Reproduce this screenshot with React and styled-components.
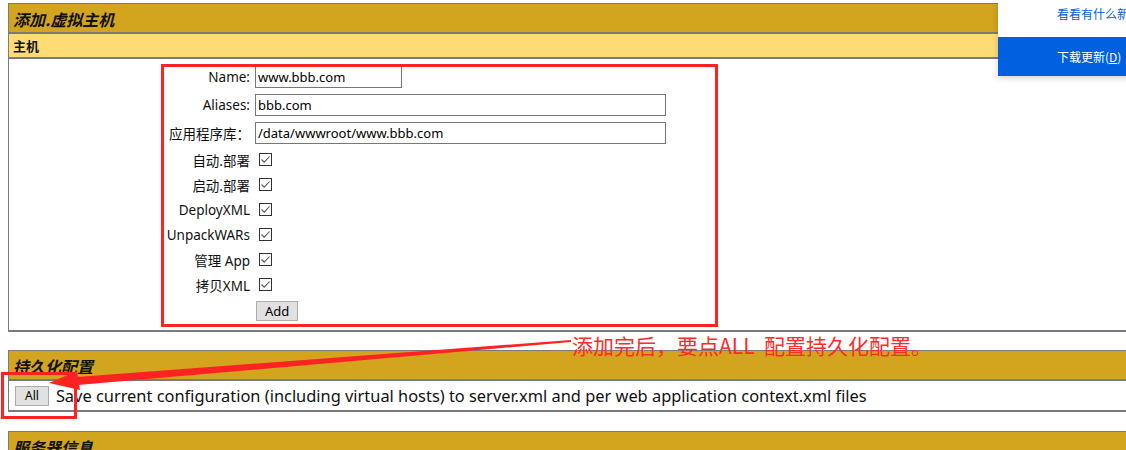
import React from 'react';
import styled, { createGlobalStyle } from 'styled-components';

const GlobalStyle = createGlobalStyle`
  html, body {
    margin: 0;
    padding: 0;
    overflow: hidden;
    background: #fff;
  }
  body {
    font-family: "Noto Sans", "Noto Sans CJK SC", sans-serif;
    color: #000;
  }
`;

const Page = styled.div`
  position: relative;
  width: 1126px;
  height: 450px;
  overflow: hidden;
  padding: 3px 0 0 8px;
  box-sizing: border-box;
`;

const Section = styled.div`
  width: 1140px;
  border-top: 1px solid #7b7b7b;
  border-left: 1px solid #7b7b7b;
  border-bottom: 2px solid #7b7b7b;
  margin-bottom: ${p => p.$mb || 0}px;
`;

const TitleBar = styled.div`
  height: 30px;
  box-sizing: border-box;
  padding: 2px 0 0 4px;
  display: flex;
  align-items: center;
  background: #d3a41d;
  font-family: "Noto Sans CJK SC", sans-serif;
  font-size: 16px;
  font-weight: 700;
  font-style: italic;
  color: #111;
  border-bottom: 2px solid #7b7b7b;
`;

const SubBar = styled.div`
  height: 25px;
  box-sizing: border-box;
  padding-left: 4px;
  display: flex;
  align-items: center;
  background: #ffdb76;
  font-family: "Noto Sans CJK SC", sans-serif;
  font-size: 13px;
  font-weight: 700;
  color: #111;
  border-bottom: 2px solid #7b7b7b;
`;

const Body = styled.div`
  height: 271px;
  box-sizing: border-box;
  padding: 4px 0 0 154px;
  background: #fff;
`;

const Form = styled.div`
  display: flex;
  flex-direction: column;
`;

const FormRow = styled.div`
  display: grid;
  grid-template-columns: 87px auto;
  column-gap: 5px;
  align-items: center;
  height: ${p => p.$h}px;
`;

const Label = styled.label`
  text-align: right;
  white-space: nowrap;
  font-size: 13.5px;
  font-family: "Noto Sans", "Noto Sans CJK SC", sans-serif;
  color: #111;
`;

const TextInput = styled.input`
  box-sizing: border-box;
  width: ${p => p.$w}px;
  height: 22px;
  border: 1px solid #777;
  padding: 0 2px;
  font-size: 13px;
  font-family: "Noto Sans", sans-serif;
  color: #000;
  background: #fff;
  outline: none;
`;

const Box = styled.span`
  display: inline-flex;
  align-items: center;
  justify-content: center;
  width: 13px;
  height: 13px;
  box-sizing: border-box;
  margin-left: 4px;
  border: 1px solid #333;
  background: #fff;
`;

const Button = styled.button`
  box-sizing: border-box;
  height: 20px;
  padding: 0 ${p => p.$px}px;
  border: 1px solid #adadad;
  background: #e1e1e1;
  font-family: "Noto Sans", sans-serif;
  font-size: ${p => p.$fs}px;
  line-height: 18px;
  color: #000;
`;

const AddButton = styled(Button)`
  justify-self: start;
  margin-left: 1px;
`;

const SaveRow = styled.div`
  height: 29px;
  display: flex;
  align-items: center;
  gap: 7px;
  padding-left: 6px;
  background: #fff;
`;

const SaveText = styled.span`
  font-size: 16.4px;
  font-family: "Noto Sans", sans-serif;
  white-space: nowrap;
  color: #111;
`;

const Highlight = styled.div`
  position: absolute;
  left: ${p => p.$x}px;
  top: ${p => p.$y}px;
  width: ${p => p.$w}px;
  height: ${p => p.$h}px;
  box-sizing: border-box;
  border: 3px solid #ff2222;
  pointer-events: none;
`;

const Note = styled.div`
  position: absolute;
  left: 572px;
  top: 333px;
  font-family: "Noto Sans CJK SC", sans-serif;
  font-size: 21px;
  line-height: 24px;
  color: #ff2a2a;
  white-space: pre;
`;

const ArrowSvg = styled.svg`
  position: absolute;
  left: 0;
  top: 0;
  pointer-events: none;
`;

const Popup = styled.div`
  position: absolute;
  top: 0;
  left: 998px;
  width: 160px;
  box-shadow: 0 2px 6px rgba(0, 0, 0, 0.18);
  font-family: "Noto Sans CJK SC", sans-serif;
  font-size: 12px;
`;

const PopupLink = styled.div`
  height: 37px;
  box-sizing: border-box;
  padding: 5px 0 0 59px;
  background: #fff;
  color: #0060df;
  white-space: nowrap;
`;

const PopupAction = styled.div`
  height: 39px;
  display: flex;
  align-items: center;
  padding-left: 59px;
  background: #0061e0;
  color: #fff;
  white-space: nowrap;
`;

function Check() {
  return (
    <Box>
      <svg width="11" height="11" viewBox="0 0 11 11">
        <polyline points="1.5,5.5 4.2,8.2 9.5,2.5" fill="none" stroke="#555" strokeWidth="1.1" />
      </svg>
    </Box>
  );
}

const checks = ['自动.部署', '启动.部署', 'DeployXML', 'UnpackWARs', '管理 App', '拷贝XML'];

export default function App() {
  return (
    <Page>
      <GlobalStyle />
      <Section $mb={18}>
        <TitleBar>添加.虚拟主机</TitleBar>
        <SubBar>主机</SubBar>
        <Body>
          <Form>
            <FormRow $h={28}>
              <Label>Name:</Label>
              <TextInput $w={147} defaultValue="www.bbb.com" />
            </FormRow>
            <FormRow $h={28}>
              <Label>Aliases:</Label>
              <TextInput $w={411} defaultValue="bbb.com" />
            </FormRow>
            <FormRow $h={28}>
              <Label>应用程序库：</Label>
              <TextInput $w={411} defaultValue="/data/wwwroot/www.bbb.com" />
            </FormRow>
            {checks.map(c => (
              <FormRow $h={25} key={c}>
                <Label>{c}</Label>
                <Check />
              </FormRow>
            ))}
            <FormRow $h={27}>
              <span />
              <AddButton $px={8} $fs={13}>Add</AddButton>
            </FormRow>
          </Form>
        </Body>
      </Section>
      <Section $mb={19}>
        <TitleBar>持久化配置</TitleBar>
        <SaveRow>
          <Button $px={9} $fs={12}>All</Button>
          <SaveText>
            Save current configuration (including virtual hosts) to server.xml and per web application context.xml files
          </SaveText>
        </SaveRow>
      </Section>
      <Section>
        <TitleBar>服务器信息</TitleBar>
      </Section>

      <Highlight $x={161} $y={64} $w={557} $h={263} />
      <Highlight $x={1} $y={372} $w={76} $h={47} />
      <ArrowSvg width="1126" height="450">
        <polygon points="571,340 571,342 78,385 77,377" fill="#ff2222" />
        <polygon points="49,383 77,371 80,390" fill="#ff2222" />
      </ArrowSvg>
      <Note>添加完后，要点ALL  配置持久化配置。</Note>

      <Popup>
        <PopupLink>看看有什么新功能</PopupLink>
        <PopupAction>
          下载更新(<u>D</u>)
        </PopupAction>
      </Popup>
    </Page>
  );
}
